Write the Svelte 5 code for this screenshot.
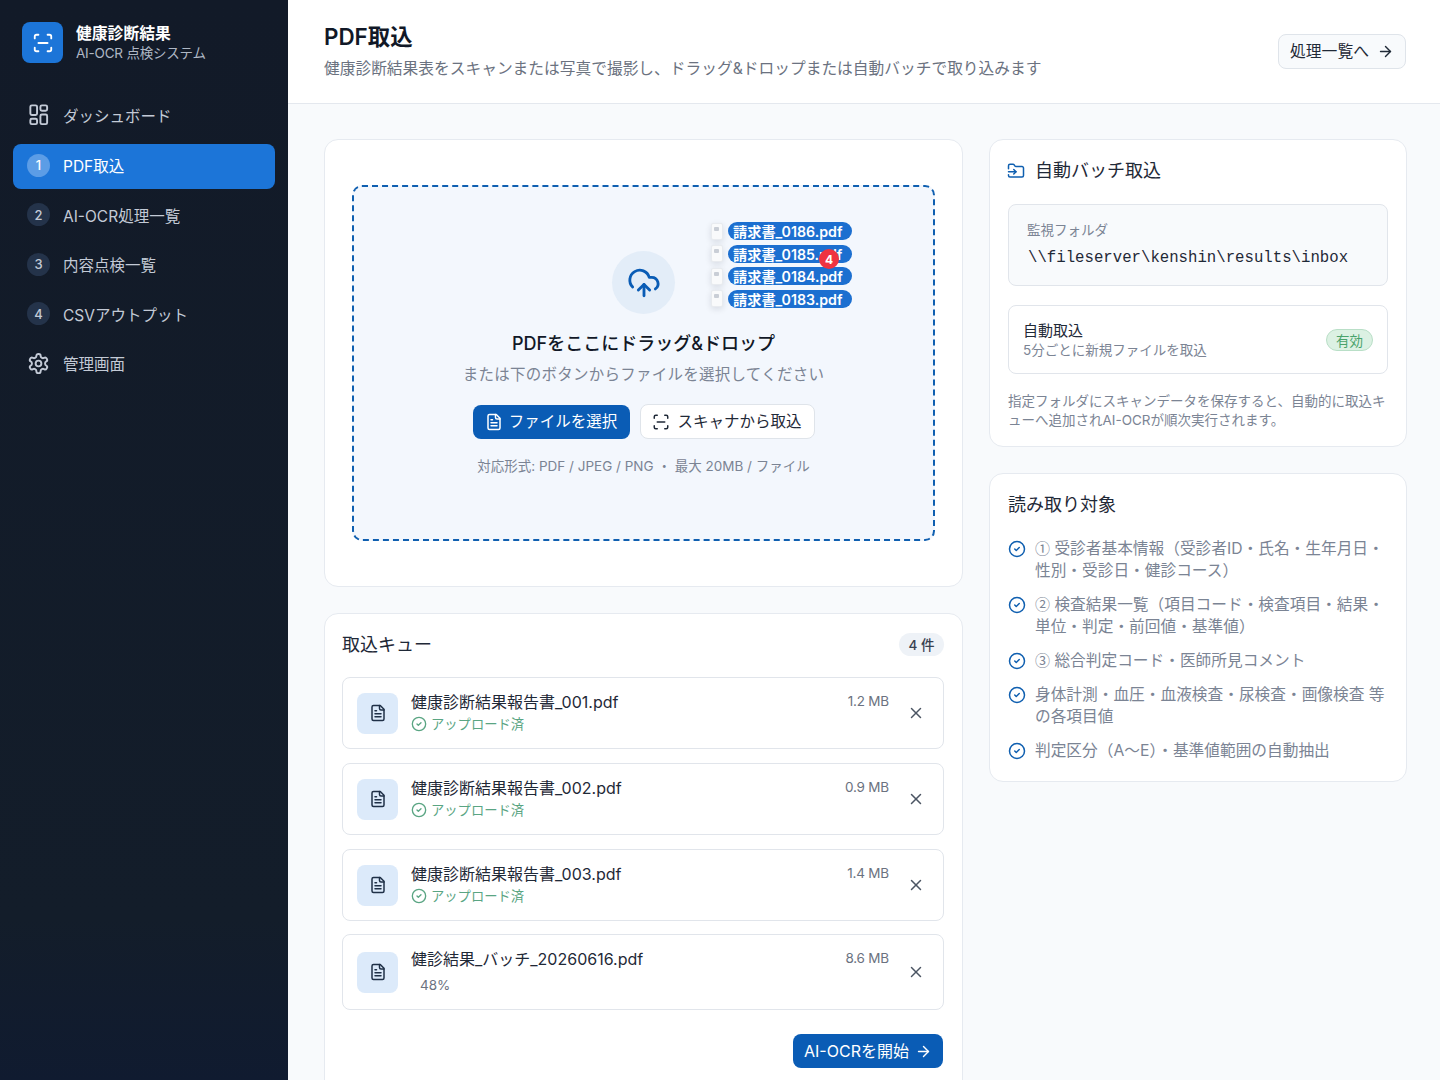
<script>
  const nav = [
    { n: 'grid', label: 'ダッシュボード' },
    { n: '1', label: 'PDF取込', active: true },
    { n: '2', label: 'AI-OCR処理一覧' },
    { n: '3', label: '内容点検一覧' },
    { n: '4', label: 'CSVアウトプット' },
    { n: 'gear', label: '管理画面' }
  ];
  const ghosts = ['請求書_0186.pdf', '請求書_0185.pdf', '請求書_0184.pdf', '請求書_0183.pdf'];
  const queue = [
    { name: '健康診断結果報告書_001.pdf', size: '1.2 MB', done: true },
    { name: '健康診断結果報告書_002.pdf', size: '0.9 MB', done: true },
    { name: '健康診断結果報告書_003.pdf', size: '1.4 MB', done: true },
    { name: '健診結果_バッチ_20260616.pdf', size: '8.6 MB', done: false }
  ];
  const targets = [
    { mark: '①', text: '受診者基本情報（受診者ID・氏名・生年月日・性別・受診日・健診コース）' },
    { mark: '②', text: '検査結果一覧（項目コード・検査項目・結果・単位・判定・前回値・基準値）' },
    { mark: '③', text: '総合判定コード・医師所見コメント' },
    { mark: '', text: '身体計測・血圧・血液検査・尿検査・画像検査 等の各項目値' },
    { mark: '', text: '判定区分（A〜E）・基準値範囲の自動抽出' }
  ];
</script>

{#snippet scan()}
  <path d="M3 7V5a2 2 0 0 1 2-2h2" /><path d="M17 3h2a2 2 0 0 1 2 2v2" /><path d="M21 17v2a2 2 0 0 1-2 2h-2" /><path d="M7 21H5a2 2 0 0 1-2-2v-2" /><path d="M7 12h10" />
{/snippet}
{#snippet filetext()}
  <path d="M15 2H6a2 2 0 0 0-2 2v16a2 2 0 0 0 2 2h12a2 2 0 0 0 2-2V7Z" /><path d="M14 2v4a2 2 0 0 0 2 2h4" /><path d="M10 9H8" /><path d="M16 13H8" /><path d="M16 17H8" />
{/snippet}
{#snippet arrow()}
  <path d="M5 12h14" /><path d="m12 5 7 7-7 7" />
{/snippet}
{#snippet check()}
  <circle cx="12" cy="12" r="10" /><path d="m9 12 2 2 4-4" />
{/snippet}

<div class="app">
  <aside class="sidebar">
    <div class="brand">
      <div class="logo"><svg class="ic" width="22" height="22" viewBox="0 0 24 24">{@render scan()}</svg></div>
      <div class="brand-text">
        <div class="brand-title">健康診断結果</div>
        <div class="brand-sub">AI-OCR 点検システム</div>
      </div>
    </div>
    <nav class="nav">
      {#each nav as item}
        <div class="nav-item" class:active={item.active}>
          {#if item.n === 'grid'}
            <svg class="ic nav-ic" width="23" height="23" viewBox="0 0 24 24"><rect x="3.5" y="2.5" width="7" height="10" rx="1.5" /><rect x="14" y="2.5" width="7" height="5.5" rx="1.5" /><rect x="14" y="12" width="7" height="10" rx="1.5" /><rect x="3.5" y="16.5" width="7" height="5.5" rx="1.5" /></svg>
          {:else if item.n === 'gear'}
            <svg class="ic nav-ic" width="23" height="23" viewBox="0 0 24 24"><path d="M12.22 2h-.44a2 2 0 0 0-2 2v.18a2 2 0 0 1-1 1.73l-.43.25a2 2 0 0 1-2 0l-.15-.08a2 2 0 0 0-2.73.73l-.22.38a2 2 0 0 0 .73 2.73l.15.1a2 2 0 0 1 1 1.72v.51a2 2 0 0 1-1 1.74l-.15.09a2 2 0 0 0-.73 2.73l.22.38a2 2 0 0 0 2.73.73l.15-.08a2 2 0 0 1 2 0l.43.25a2 2 0 0 1 1 1.73V20a2 2 0 0 0 2 2h.44a2 2 0 0 0 2-2v-.18a2 2 0 0 1 1-1.73l.43-.25a2 2 0 0 1 2 0l.15.08a2 2 0 0 0 2.73-.73l.22-.39a2 2 0 0 0-.73-2.73l-.15-.08a2 2 0 0 1-1-1.74v-.5a2 2 0 0 1 1-1.74l.15-.09a2 2 0 0 0 .73-2.73l-.22-.38a2 2 0 0 0-2.73-.73l-.15.08a2 2 0 0 1-2 0l-.43-.25a2 2 0 0 1-1-1.73V4a2 2 0 0 0-2-2z" /><circle cx="12" cy="12" r="3" /></svg>
          {:else}
            <span class="num">{item.n}</span>
          {/if}
          <span>{item.label}</span>
        </div>
      {/each}
    </nav>
  </aside>

  <main class="main">
    <header class="header">
      <div>
        <h1>PDF取込</h1>
        <p>健康診断結果表をスキャンまたは写真で撮影し、ドラッグ&ドロップまたは自動バッチで取り込みます</p>
      </div>
      <button class="btn-outline head-btn"><span class="t">処理一覧へ</span> <svg class="ic" width="17" height="17" viewBox="0 0 24 24">{@render arrow()}</svg></button>
    </header>

    <div class="content">
      <div class="col">
        <section class="card upload">
          <div class="drop">
            <div class="ghosts">
              {#each ghosts as g}
                <div class="ghost">
                  <span class="doc"><span class="fold"></span></span>
                  <span class="pill">{g}</span>
                </div>
              {/each}
              <span class="count">4</span>
            </div>
            <div class="cloud">
              <svg class="ic" width="34" height="34" viewBox="0 0 24 24"><path d="M12 13v8" /><path d="M4 14.9A7 7 0 1 1 15.7 8h1.8a4.5 4.5 0 0 1 2.5 8.2" /><path d="m8 17 4-4 4 4" /></svg>
            </div>
            <h2>PDFをここにドラッグ&ドロップ</h2>
            <p class="drop-sub">または下のボタンからファイルを選択してください</p>
            <div class="drop-btns">
              <button class="btn-primary"><svg class="ic" width="18" height="18" viewBox="0 0 24 24">{@render filetext()}</svg><span class="t">ファイルを選択</span></button>
              <button class="btn-outline white"><svg class="ic" width="18" height="18" viewBox="0 0 24 24">{@render scan()}</svg><span class="t">スキャナから取込</span></button>
            </div>
            <p class="hint">対応形式: PDF / JPEG / PNG ・ 最大 20MB / ファイル</p>
          </div>
        </section>

        <section class="card queue">
          <div class="queue-head">
            <h3>取込キュー</h3>
            <span class="count-badge">4 件</span>
          </div>
          <div class="rows">
            {#each queue as q}
              <div class="row" class:tall={!q.done}>
                <div class="file-ic"><svg class="ic" width="18" height="18" viewBox="0 0 24 24">{@render filetext()}</svg></div>
                <div class="row-body">
                  <div class="row-top">
                    <span class="fname">{q.name}</span>
                    <span class="fsize">{q.size}</span>
                  </div>
                  {#if q.done}
                    <div class="status"><svg class="ic" width="16" height="16" viewBox="0 0 24 24">{@render check()}</svg>アップロード済</div>
                  {:else}
                    <div class="pct">48%</div>
                  {/if}
                </div>
                <svg class="ic close" width="18" height="18" viewBox="0 0 24 24"><path d="M18 6 6 18" /><path d="m6 6 12 12" /></svg>
              </div>
            {/each}
          </div>
          <div class="queue-foot">
            <button class="btn-primary start"><span class="t">AI-OCRを開始</span> <svg class="ic" width="17" height="17" viewBox="0 0 24 24">{@render arrow()}</svg></button>
          </div>
        </section>
      </div>

      <div class="col">
        <section class="card side batch">
          <h3 class="batch-title"><svg class="ic folder" width="18" height="18" viewBox="0 0 24 24"><path d="M2 9V5a2 2 0 0 1 2-2h3.9a2 2 0 0 1 1.69.9l.81 1.2a2 2 0 0 0 1.67.9H20a2 2 0 0 1 2 2v10a2 2 0 0 1-2 2H4a2 2 0 0 1-2-2v-1" /><path d="M2 13h10" /><path d="m9 16 3-3-3-3" /></svg>自動バッチ取込</h3>
          <div class="folder-box">
            <div class="folder-label">監視フォルダ</div>
            <div class="folder-path">\\fileserver\kenshin\results\inbox</div>
          </div>
          <div class="auto-box">
            <div>
              <div class="auto-title">自動取込</div>
              <div class="auto-sub">5分ごとに新規ファイルを取込</div>
            </div>
            <span class="on">有効</span>
          </div>
          <p class="note">指定フォルダにスキャンデータを保存すると、自動的に取込キューへ追加されAI-OCRが順次実行されます。</p>
        </section>

        <section class="card side targets">
          <h3>読み取り対象</h3>
          <ul>
            {#each targets as t}
              <li><svg class="ic" width="18" height="18" viewBox="0 0 24 24">{@render check()}</svg><span>{#if t.mark}<span class="mark">{t.mark}</span>{' '}{/if}{t.text}</span></li>
            {/each}
          </ul>
        </section>
      </div>
    </div>
  </main>
</div>

<style>
  :global(body) { margin: 0; }
  * { box-sizing: border-box; }
  h1, h2, h3, p, ul { margin: 0; padding: 0; }
  .app {
    display: flex; height: 1080px; overflow: hidden;
    font-family: Inter, "Noto Sans CJK JP", sans-serif;
    color: #1f2937; background: #f8fafc;
  }
  .ic { fill: none; stroke: currentColor; stroke-width: 2; stroke-linecap: round; stroke-linejoin: round; flex: none; }
  .t { margin-bottom: 3px; }
  .head-btn .t { margin-bottom: 1px; }

  .sidebar { width: 288px; flex: none; background: linear-gradient(#121a28, #131d2a 85%, #101b30); color: #c3cad6; padding: 22px 13px 0; }
  .brand { display: flex; align-items: center; gap: 13px; padding-left: 9px; height: 41px; }
  .logo { width: 41px; height: 41px; border-radius: 8px; background: #1c75d8; color: #fff; display: flex; align-items: center; justify-content: center; }
  .brand-text { padding-top: 2px; }
  .brand-title { font-size: 15.8px; font-weight: 700; color: #fff; line-height: 20px; }
  .brand-sub { font-size: 13.5px; color: #aeb7c4; line-height: 19px; letter-spacing: -0.2px; }
  .nav { margin-top: 31px; display: flex; flex-direction: column; gap: 4.6px; }
  .nav-item { height: 45px; border-radius: 8px; display: flex; align-items: center; gap: 13px; padding: 0 0 2px 14px; font-size: 15.5px; }
  .nav-item:first-child { padding-bottom: 4px; }
  .nav-item.active { background: #1c75d8; color: #fff; }
  .num { width: 23px; height: 23px; border-radius: 50%; background: #24334a; display: flex; align-items: center; justify-content: center; font-size: 13px; font-weight: 500; }
  .active .num { background: #5c9de6; }

  .main { flex: 1; min-width: 0; display: flex; flex-direction: column; }
  .header { height: 104px; flex: none; background: #fff; border-bottom: 1px solid #e4e8ee; padding: 0 34px 0 36px; display: flex; align-items: center; justify-content: space-between; }
  h1 { font-size: 22.4px; font-weight: 600; color: #111827; line-height: 30px; margin-bottom: 5px; }
  .header p { font-size: 15.73px; color: #6b7280; line-height: 24px; }
  button { font-family: inherit; cursor: pointer; display: inline-flex; align-items: center; justify-content: center; }
  .btn-outline { height: 35px; border: 1px solid #dfe4ea; border-radius: 8px; background: #f8fafc; color: #1f2937; font-size: 15.8px; gap: 8px; padding: 0; }
  .head-btn { width: 128px; margin-bottom: 1px; }
  .btn-outline.white { background: #fff; width: 175px; gap: 7px; font-size: 15.5px; }
  .btn-primary { height: 34px; border: none; border-radius: 8px; background: #0a5cb5; color: #fff; font-size: 15.5px; gap: 6px; padding: 0; width: 157px; }

  .content { flex: 1; display: grid; grid-template-columns: 639px 418px; gap: 26px; padding: 35px 0 0 36px; align-items: start; }
  .col { display: flex; flex-direction: column; gap: 26px; }
  .card { background: #fff; border: 1px solid #e6eaf0; border-radius: 14px; }
  .upload { padding: 45px 27px; }
  .drop { position: relative; height: 356px; border: 2px dashed #0f5fb0; border-radius: 10px; background: #f3f7fd; display: flex; flex-direction: column; align-items: center; justify-content: center; }
  .cloud { width: 63px; height: 63px; border-radius: 50%; background: #e3edf8; color: #0a5cb5; display: flex; align-items: center; justify-content: center; }
  .drop h2 { font-size: 18px; font-weight: 500; color: #111827; line-height: 28px; margin-top: 16px; }
  .drop-sub { font-size: 15.5px; color: #7b8494; line-height: 20px; margin-top: 7px; letter-spacing: 0.25px; }
  .drop-btns { display: flex; gap: 10px; margin-top: 19px; align-items: center; }
  .hint { font-size: 13.5px; color: #7b8494; line-height: 18px; margin-top: 18px; }
  .ghosts { position: absolute; left: 357px; top: 35px; display: flex; flex-direction: column; gap: 4.6px; }
  .ghost { display: flex; align-items: center; gap: 5px; height: 18px; }
  .doc { position: relative; width: 12px; height: 17px; background: #f9fafb; border: 1px solid #e8ebef; border-radius: 2px; box-shadow: 0 2px 6px rgba(15, 26, 44, .12); }
  .fold { position: absolute; left: 2px; top: 3px; width: 5px; height: 4px; background: #c9ced6; border-radius: 1px; }
  .pill { background: #1c6fd0; color: #fff; height: 18px; width: 124px; border-radius: 9px; padding-left: 5px; font-size: 14.2px; font-weight: 600; display: flex; align-items: center; white-space: nowrap; }
  .count { position: absolute; left: 108px; top: 27px; width: 20px; height: 20px; border-radius: 50%; background: #ef3340; color: #fff; font-size: 12px; font-weight: 700; display: flex; align-items: center; justify-content: center; }

  .queue { padding: 18px 18px 12px 17px; height: 500px; }
  .queue-head { display: flex; justify-content: space-between; align-items: center; height: 24px; margin-bottom: 21px; }
  .queue h3 { margin-top: -3px; }
  .queue h3, .targets h3 { font-size: 18px; font-weight: 400; color: #1f2937; }
  .count-badge { width: 45px; height: 23px; border-radius: 12px; background: #eef2f7; font-size: 13.5px; font-weight: 500; display: flex; align-items: center; justify-content: center; color: #374151; }
  .rows { display: flex; flex-direction: column; gap: 14px; }
  .row { height: 72px; border: 1px solid #e1e5eb; border-radius: 8px; padding: 0 18px 0 14px; display: flex; align-items: center; gap: 13px; background: #fff; }
  .row.tall { height: 76px; margin-top: -1px; }
  .file-ic { width: 41px; height: 41px; border-radius: 8px; background: #dceafa; color: #1f3047; display: flex; align-items: center; justify-content: center; flex: none; }
  .row-body { flex: 1; min-width: 0; margin-bottom: 2px; }
  .row-top { display: flex; justify-content: space-between; align-items: center; height: 22px; }
  .fname { font-size: 16px; color: #1f2937; }
  .fsize { font-size: 13.5px; color: #6b7280; letter-spacing: -0.2px; }
  .status { display: flex; align-items: center; gap: 4px; font-size: 13.3px; color: #5aa583; line-height: 20px; margin-top: 2px; }
  .pct { font-size: 13.5px; color: #6b7280; padding-left: 9px; line-height: 20px; margin-top: 6px; }
  .close { color: #4b5563; margin-left: 5px; }
  .queue-foot { display: flex; justify-content: flex-end; margin-top: 24px; padding-right: 1px; }
  .start { width: 150px; font-size: 16px; }

  .side { padding: 19px 18px; }
  .batch { padding-bottom: 16px; }
  .batch-title { display: flex; align-items: center; gap: 10px; font-size: 18px; font-weight: 400; color: #1f2937; line-height: 24px; margin-left: -1px; }
  .folder { color: #0f5fb0; }
  .folder-box { margin-top: 21px; height: 82px; background: #f8fafc; border: 1px solid #e1e5eb; border-radius: 8px; padding: 15px 18px; }
  .folder-label { font-size: 13.5px; color: #7b8494; line-height: 20px; }
  .folder-path { font-family: "Liberation Mono", monospace; font-size: 15.7px; color: #1f2937; line-height: 22px; margin-top: 7px; padding-left: 1px; }
  .auto-box { margin-top: 19px; height: 69px; border: 1px solid #e1e5eb; border-radius: 8px; padding: 2px 14px 0; display: flex; align-items: center; justify-content: space-between; }
  .auto-title { font-size: 15px; line-height: 20px; color: #1f2937; }
  .auto-sub { font-size: 13.5px; line-height: 19px; color: #7b8494; }
  .on { width: 47px; height: 22px; margin-bottom: 2px; border-radius: 11px; background: #dcf1e3; border: 1px solid #b9dfc7; color: #4aa36c; font-size: 13.5px; display: flex; align-items: center; justify-content: center; }
  .note { margin-top: 18px; font-size: 13.5px; line-height: 19px; color: #7b8494; }
  .targets { padding-top: 18px; padding-bottom: 19px; }
  .targets h3 { line-height: 26px; }
  ul { list-style: none; margin-top: 20px; display: flex; flex-direction: column; gap: 12px; }
  li { display: flex; gap: 9px; font-size: 15.7px; line-height: 22px; color: #7b8494; }
  li .ic { color: #0f5fb0; margin-top: 2px; }
  .mark { font-size: 15px; line-height: 1; font-family: "Noto Sans CJK JP", sans-serif; }
</style>
